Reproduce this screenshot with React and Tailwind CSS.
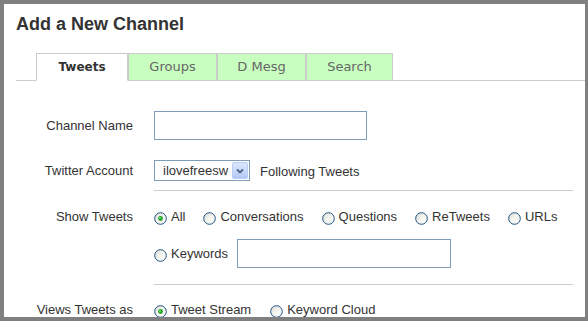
import React from "react";

const Radio = ({ checked }) => (
  <svg width="13" height="13" viewBox="0 0 13 13" className="shrink-0">
    <defs>
      <linearGradient id="rg" x1="0" y1="0" x2="1" y2="1">
        <stop offset="0" stopColor="#dcdcd6" />
        <stop offset="0.5" stopColor="#f4f4f0" />
        <stop offset="1" stopColor="#ffffff" />
      </linearGradient>
    </defs>
    <circle cx="6.5" cy="6.5" r="5.8" fill="url(#rg)" stroke="#1c5180" strokeWidth="1" />
    {checked && (
      <>
        <circle cx="6.5" cy="6.5" r="2.4" fill="#21a121" />
        <circle cx="6" cy="6" r="0.9" fill="#7ee07e" />
      </>
    )}
  </svg>
);

const Option = ({ label, checked }) => (
  <div className="flex items-center">
    <span className="mt-[3px]">
      <Radio checked={checked} />
    </span>
    <span className="ml-[4px]">{label}</span>
  </div>
);

const Tab = ({ label, active, w }) => (
  <div
    className={`h-[28px] -mb-px flex items-center justify-center border border-[#cccccc] ${w} ${
      active
        ? "bg-white border-b-white font-bold text-[12px] text-[#333333]"
        : "bg-[#c8ffc0] text-[13px] text-[#666666]"
    }`}
    style={{ fontFamily: "'DejaVu Sans', sans-serif" }}
  >
    {label}
  </div>
);

export default function App() {
  return (
    <div
      className="w-[588px] h-[321px] bg-white border-t-[4px] border-l-[4px] border-r-[3px] border-b-[4px] border-[#808080] overflow-hidden text-[13px] text-[#333333]"
      style={{ fontFamily: "'Liberation Sans', Arial, sans-serif" }}
    >
      <h1 className="pl-[12px] pt-[10px] text-[18px] font-bold leading-[20px] text-[#333333]">
        Add a New Channel
      </h1>

      {/* Tabs */}
      <div className="ml-[12px] mt-[19px] pl-[20px] flex border-b border-[#cccccc]">
        <Tab label="Tweets" active w="w-[92px]" />
        <Tab label="Groups" w="w-[89px]" />
        <Tab label="D Mesg" w="w-[89px]" />
        <Tab label="Search" w="w-[87px]" />
      </div>

      {/* Channel Name */}
      <div className="mt-[30px] flex items-center h-[29px]">
        <div className="w-[129px] text-right">Channel Name</div>
        <input className="ml-[21px] w-[213px] h-[29px] border border-[#7f9db9] bg-white outline-none" />
      </div>

      {/* Twitter Account */}
      <div className="mt-[20px] flex items-center h-[21px]">
        <div className="w-[129px] text-right">Twitter Account</div>
        <div className="ml-[21px] w-[96px] h-[21px] border border-[#7f9db9] flex items-center justify-between pl-[8px] pr-px">
          <span>ilovefreesw</span>
          <span className="w-[16px] h-[17px] rounded-[2px] border border-[#b8cdf8] bg-gradient-to-b from-[#dde8fe] to-[#b5c9f6] flex items-center justify-center">
            <svg width="8" height="6" viewBox="0 0 8 6">
              <path d="M1 1.5 L4 4.5 L7 1.5" fill="none" stroke="#4d6185" strokeWidth="1.8" />
            </svg>
          </span>
        </div>
        <span className="ml-[10px] mt-[2px]">Following Tweets</span>
      </div>

      <div className="ml-[150px] mt-[9px] w-[419px] border-t border-[#cccccc]" />

      {/* Show Tweets */}
      <div className="mt-[16px] flex">
        <div className="w-[129px] text-right leading-[20px]">Show Tweets</div>
        <div className="ml-[21px] flex flex-col">
          <div className="h-[20px] flex items-center gap-[18px]">
            <Option label="All" checked />
            <Option label="Conversations" />
            <Option label="Questions" />
            <Option label="ReTweets" />
            <Option label="URLs" />
          </div>
          <div className="mt-[12px] h-[29px] flex items-center">
            <Option label="Keywords" />
            <input className="ml-[9px] w-[214px] h-[29px] border border-[#7f9db9] bg-white outline-none" />
          </div>
        </div>
      </div>

      <div className="ml-[150px] mt-[16px] w-[419px] border-t border-[#cccccc]" />

      {/* Views Tweets as */}
      <div className="mt-[15px] flex">
        <div className="w-[129px] text-right leading-[20px]">Views Tweets as</div>
        <div className="ml-[21px] h-[20px] flex items-center gap-[19px]">
          <Option label="Tweet Stream" checked />
          <Option label="Keyword Cloud" />
        </div>
      </div>
    </div>
  );
}
